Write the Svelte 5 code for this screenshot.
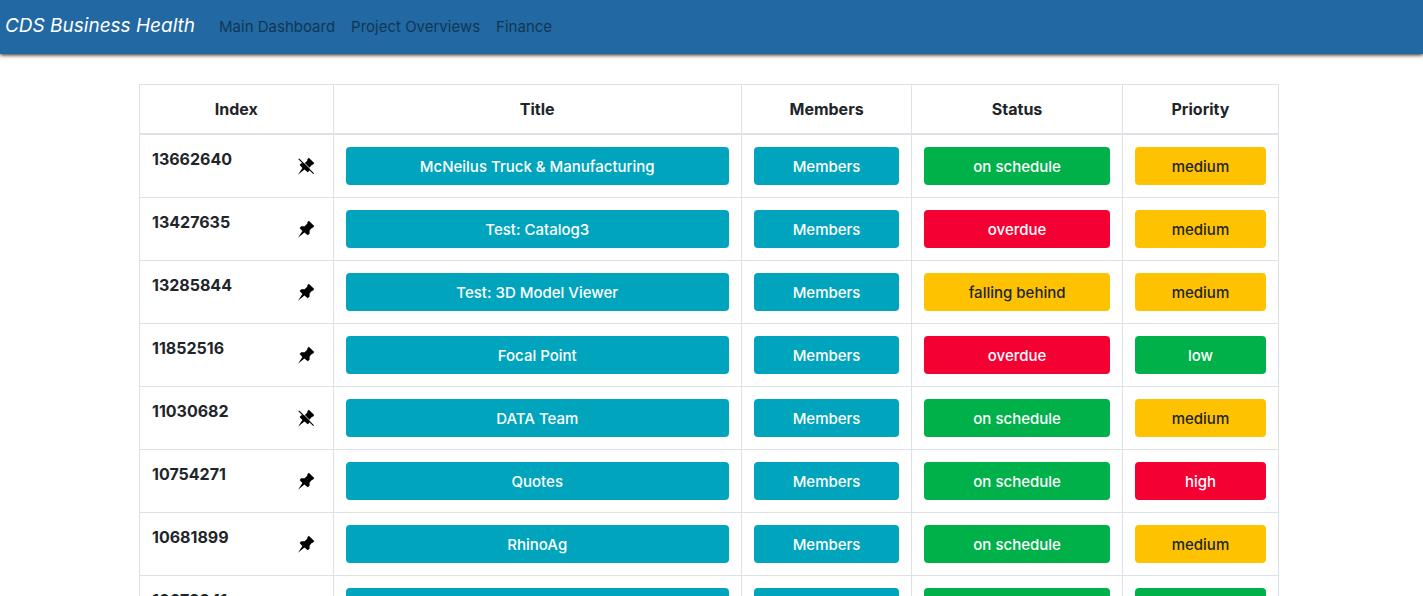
<script>
  const links = ['Main Dashboard', 'Project Overviews', 'Finance'];

  const statusTone = { 'on schedule': 'success', overdue: 'danger', 'falling behind': 'warning' };
  const priorityTone = { low: 'success', medium: 'warning', high: 'danger' };

  let projects = $state([
    { id: '13662640', title: 'McNeilus Truck & Manufacturing', status: 'on schedule', priority: 'medium', pinned: true },
    { id: '13427635', title: 'Test: Catalog3', status: 'overdue', priority: 'medium', pinned: false },
    { id: '13285844', title: 'Test: 3D Model Viewer', status: 'falling behind', priority: 'medium', pinned: false },
    { id: '11852516', title: 'Focal Point', status: 'overdue', priority: 'low', pinned: false },
    { id: '11030682', title: 'DATA Team', status: 'on schedule', priority: 'medium', pinned: true },
    { id: '10754271', title: 'Quotes', status: 'on schedule', priority: 'high', pinned: false },
    { id: '10681899', title: 'RhinoAg', status: 'on schedule', priority: 'medium', pinned: false },
    { id: '10679941', title: '', status: 'on schedule', priority: 'low', pinned: false }
  ]);
</script>

<nav class="navbar">
  <a class="brand" href="#home">CDS Business Health</a>
  {#each links as link}
    <a class="nav-link" href="#{link}">{link}</a>
  {/each}
</nav>

<main>
  <table>
    <colgroup>
      <col class="col-index" />
      <col class="col-title" />
      <col class="col-members" />
      <col class="col-status" />
      <col class="col-priority" />
    </colgroup>
    <thead>
      <tr>
        <th scope="col">Index</th>
        <th scope="col">Title</th>
        <th scope="col">Members</th>
        <th scope="col">Status</th>
        <th scope="col">Priority</th>
      </tr>
    </thead>
    <tbody>
      {#each projects as project (project.id)}
        <tr>
          <th scope="row">
            <div class="index">
              <span>{project.id}</span>
              <button
                class="pin"
                aria-label={project.pinned ? 'Unpin project' : 'Pin project'}
                onclick={() => (project.pinned = !project.pinned)}
              >
                <svg viewBox="0 0 18 18" width="18" height="18" aria-hidden="true">
                  <path d="M11.8 0.8 17.2 6 16.2 7.6 14.8 8 12.6 10.4 12.6 13.6 10.8 15.2 7.4 12.4 1 17.8 5.4 11 2.6 8 4.2 6.2 7.6 6.2 10.2 3.8 10.4 2.2Z" />
                  {#if project.pinned}
                    <path class="gap" d="M2.6 1.2 17.4 16" />
                    <path class="slash" d="M1.8 1.8 16.6 16.6" />
                  {/if}
                </svg>
              </button>
            </div>
          </th>
          <td><button class="btn info">{project.title}</button></td>
          <td><button class="btn info">Members</button></td>
          <td><button class="btn {statusTone[project.status]}">{project.status}</button></td>
          <td><button class="btn {priorityTone[project.priority]}">{project.priority}</button></td>
        </tr>
      {/each}
    </tbody>
  </table>
</main>

<style>
  :global(html) {
    scrollbar-width: none;
  }

  :global(body) {
    margin: 0;
    background: #fff;
    color: #212529;
    font-family: Inter, 'Liberation Sans', sans-serif;
    font-size: 16px;
    line-height: 24px;
  }

  .navbar {
    display: flex;
    align-items: center;
    padding: 7px 5px;
    background: #2268a2;
    box-shadow: 0 1px 4px #2b1c10;
  }

  .brand {
    margin-right: 16px;
    padding: 4px 0 6px;
    color: #fff;
    font-size: 19px;
    font-style: italic;
    line-height: 30px;
    text-decoration: none;
    white-space: nowrap;
  }

  .nav-link {
    padding: 8px;
    color: rgba(0, 0, 0, 0.5);
    font-size: 15px;
    text-decoration: none;
    white-space: nowrap;
  }

  main {
    max-width: 1140px;
    margin: 0 auto;
    padding: 30px 5px 16px 0;
  }

  table {
    width: 100%;
    table-layout: fixed;
    border-collapse: collapse;
    border: 1px solid #dee2e6;
  }

  .col-index { width: 17%; }
  .col-title { width: 35.84%; }
  .col-members { width: 14.96%; }
  .col-status { width: 18.5%; }
  .col-priority { width: 13.7%; }

  th,
  td {
    padding: 12px;
    border: 1px solid #dee2e6;
    vertical-align: top;
  }

  thead th {
    border-bottom-width: 2px;
    text-align: center;
  }

  .index {
    display: flex;
    justify-content: space-between;
  }

  .pin {
    display: flex;
    align-items: center;
    height: 38px;
    margin: 0;
    padding: 0 6px;
    border: 0;
    background: none;
    cursor: pointer;
  }

  .gap {
    stroke: #fff;
    stroke-width: 1;
  }

  .slash {
    stroke: #000;
    stroke-width: 1.2;
  }

  .btn {
    display: block;
    width: 100%;
    height: 38px;
    padding: 7px 12px 5px;
    border: 0;
    border-radius: 4px;
    color: #fff;
    font-family: inherit;
    font-size: 15px;
    font-weight: 500;
    line-height: 24px;
    text-align: center;
    cursor: pointer;
  }

  .info { background: #00a5bd; }
  .success { background: #00b14a; }
  .danger { background: #f50033; }
  .warning { background: #ffc200; color: #212529; }
</style>
